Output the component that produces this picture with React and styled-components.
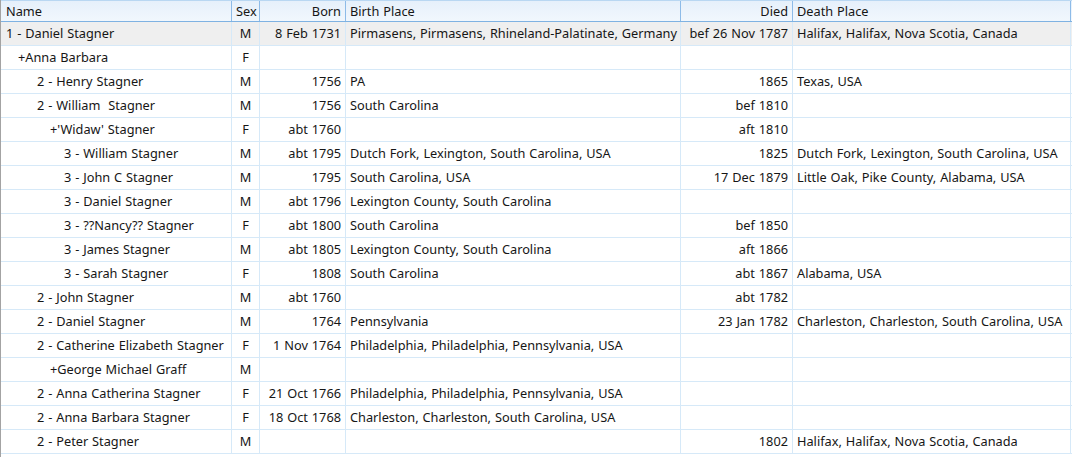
import styled, { createGlobalStyle } from "styled-components";

const GlobalStyle = createGlobalStyle`
  html, body {
    margin: 0;
    padding: 0;
    background: #ffffff;
  }
  body {
    font-family: "Noto Sans", "Open Sans", sans-serif;
    font-size: 12.75px;
    word-spacing: 0.6px;
    color: #161616;
  }
`;

const columns = [
  { key: "name", label: "Name", width: 231, align: "left" },
  { key: "sex", label: "Sex", width: 28, align: "center", headAlign: "left" },
  { key: "born", label: "Born", width: 86, align: "right" },
  { key: "birthPlace", label: "Birth Place", width: 335, align: "left" },
  { key: "died", label: "Died", width: 112, align: "right" },
  { key: "deathPlace", label: "Death Place", width: 278, align: "left" },
];

const template = columns.map((c) => `${c.width}px`).join(" ");

const people = [
  { indent: 6, name: "1 - Daniel Stagner", sex: "M", born: "8 Feb 1731", birthPlace: "Pirmasens, Pirmasens, Rhineland-Palatinate, Germany", died: "bef 26 Nov 1787", deathPlace: "Halifax, Halifax, Nova Scotia, Canada", selected: true },
  { indent: 18, name: "+Anna Barbara", sex: "F" },
  { indent: 37, name: "2 - Henry Stagner", sex: "M", born: "1756", birthPlace: "PA", died: "1865", deathPlace: "Texas, USA" },
  { indent: 37, name: "2 - William  Stagner", sex: "M", born: "1756", birthPlace: "South Carolina", died: "bef 1810" },
  { indent: 50, name: "+'Widaw' Stagner", sex: "F", born: "abt 1760", died: "aft 1810" },
  { indent: 64, name: "3 - William Stagner", sex: "M", born: "abt 1795", birthPlace: "Dutch Fork, Lexington, South Carolina, USA", died: "1825", deathPlace: "Dutch Fork, Lexington, South Carolina, USA" },
  { indent: 64, name: "3 - John C Stagner", sex: "M", born: "1795", birthPlace: "South Carolina, USA", died: "17 Dec 1879", deathPlace: "Little Oak, Pike County, Alabama, USA" },
  { indent: 64, name: "3 - Daniel Stagner", sex: "M", born: "abt 1796", birthPlace: "Lexington County, South Carolina" },
  { indent: 64, name: "3 - ??Nancy?? Stagner", sex: "F", born: "abt 1800", birthPlace: "South Carolina", died: "bef 1850" },
  { indent: 64, name: "3 - James Stagner", sex: "M", born: "abt 1805", birthPlace: "Lexington County, South Carolina", died: "aft 1866" },
  { indent: 64, name: "3 - Sarah Stagner", sex: "F", born: "1808", birthPlace: "South Carolina", died: "abt 1867", deathPlace: "Alabama, USA" },
  { indent: 37, name: "2 - John Stagner", sex: "M", born: "abt 1760", died: "abt 1782" },
  { indent: 37, name: "2 - Daniel Stagner", sex: "M", born: "1764", birthPlace: "Pennsylvania", died: "23 Jan 1782", deathPlace: "Charleston, Charleston, South Carolina, USA" },
  { indent: 37, name: "2 - Catherine Elizabeth Stagner", sex: "F", born: "1 Nov 1764", birthPlace: "Philadelphia, Philadelphia, Pennsylvania, USA" },
  { indent: 50, name: "+George Michael Graff", sex: "M" },
  { indent: 37, name: "2 - Anna Catherina Stagner", sex: "F", born: "21 Oct 1766", birthPlace: "Philadelphia, Philadelphia, Pennsylvania, USA" },
  { indent: 37, name: "2 - Anna Barbara Stagner", sex: "F", born: "18 Oct 1768", birthPlace: "Charleston, Charleston, South Carolina, USA" },
  { indent: 37, name: "2 - Peter Stagner", sex: "M", died: "1802", deathPlace: "Halifax, Halifax, Nova Scotia, Canada" },
];

export default function App() {
  return (
    <>
      <GlobalStyle />
      <Grid>
        <HeaderRow>
          {columns.map((c) => (
            <HeaderCell key={c.key} $align={c.headAlign || c.align}>
              {c.label}
            </HeaderCell>
          ))}
        </HeaderRow>

        {people.map((p, i) => (
          <Row key={i} $selected={p.selected}>
            {columns.map((c) => (
              <Cell
                key={c.key}
                $align={c.align}
                $indent={c.key === "name" ? p.indent : undefined}
              >
                {p[c.key] || ""}
              </Cell>
            ))}
          </Row>
        ))}
      </Grid>
    </>
  );
}

const Grid = styled.div`
  width: 1072px;
  height: 457px;
  overflow: hidden;
  border-left: 1px solid #a3a3a3;
  box-sizing: border-box;
  background: #ffffff;
`;

const HeaderRow = styled.div`
  display: grid;
  grid-template-columns: ${template};
  height: 22px;
  box-sizing: border-box;
  border-top: 1px solid #b9d7f2;
  border-bottom: 1px solid #7fb2e2;
  background: linear-gradient(to bottom, #e6f0fb, #f1f7fd);
`;

const HeaderCell = styled.div`
  display: flex;
  align-items: center;
  justify-content: ${({ $align }) =>
    $align === "right" ? "flex-end" : $align === "center" ? "center" : "flex-start"};
  padding: 0 4px 1px 4px;
  border-right: 1px solid #8dbbe8;
  white-space: nowrap;
  overflow: hidden;

  &:first-child {
    padding-left: 5px;
  }
`;

const Row = styled.div`
  display: grid;
  grid-template-columns: ${template};
  height: 24px;
  box-sizing: border-box;
  border-bottom: 1px solid #d6e9f8;
  background: ${({ $selected }) => ($selected ? "#efefef" : "#ffffff")};
`;

const Cell = styled.div`
  display: flex;
  align-items: center;
  justify-content: ${({ $align }) =>
    $align === "right" ? "flex-end" : $align === "center" ? "center" : "flex-start"};
  padding: 0 4px 1px ${({ $indent }) => ($indent !== undefined ? $indent - 1 : 4)}px;
  border-right: 1px solid #d6e9f8;
  white-space: pre;
  overflow: hidden;
`;
